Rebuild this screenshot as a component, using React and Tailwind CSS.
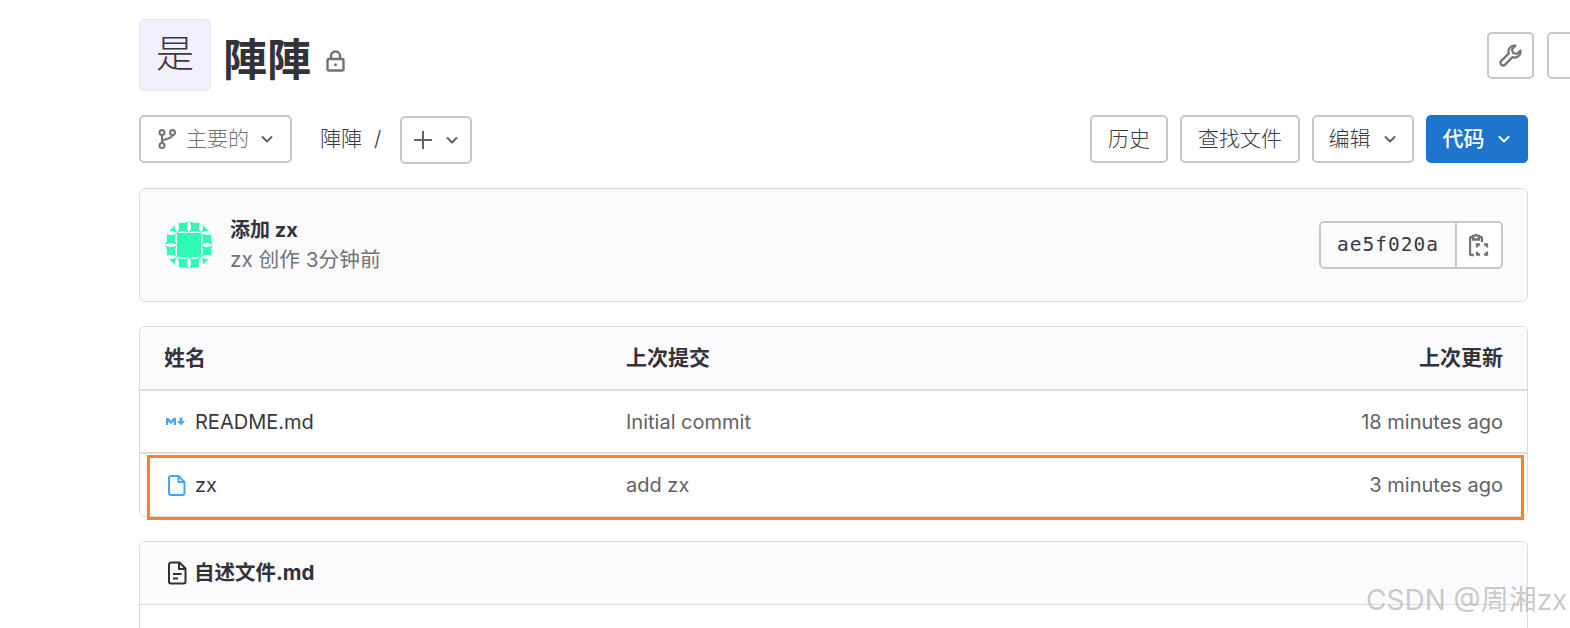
import React from "react";

const CJK = "font-['Inter','Noto_Sans_CJK_SC',sans-serif]";

function Chevron({ className = "" }) {
  return (
    <svg width="16" height="16" viewBox="0 0 16 16" fill="none" stroke="currentColor" strokeWidth="2" strokeLinecap="round" strokeLinejoin="round" className={className}>
      <path d="M3.5 6l4.5 4.5L12.5 6" />
    </svg>
  );
}

function Lock() {
  return (
    <svg width="19" height="22" viewBox="0 0 19 22" fill="none" stroke="#737278" strokeWidth="2.4">
      <rect x="1.500" y="9" width="16" height="11.500" rx="1.500" />
      <path d="M5 9V6a4.500 4.500 0 0 1 9 0v3" />
      <circle cx="9.500" cy="14.700" r="1.500" fill="#737278" stroke="none" />
    </svg>
  );
}

function Branch() {
  return (
    <svg width="20" height="22" viewBox="0 0 20 22" fill="none" stroke="#737278" strokeWidth="2">
      <circle cx="5" cy="4.500" r="2.500" />
      <circle cx="5" cy="17.500" r="2.500" />
      <circle cx="15.500" cy="4.500" r="2.500" />
      <path d="M5 7v8M5 14c0-3.500 10.500-2.500 10.500-7" />
    </svg>
  );
}

function Wrench() {
  return (
    <svg width="24" height="24" viewBox="0 0 24 24" fill="none" stroke="#737278" strokeWidth="2.200" strokeLinejoin="round">
      <path d="M15.500 2.500a6 6 0 0 0-5.700 7.900L2.300 17.900a2.600 2.600 0 0 0 3.700 3.700l7.500-7.500A6 6 0 0 0 21.500 7.500l-4 3.500-3.500-1-1-3.500 3.500-4z" />
    </svg>
  );
}

function Clipboard() {
  return (
    <svg width="20" height="26" viewBox="0 0 20 26" fill="none" stroke="#737278" strokeWidth="2.300">
      <path d="M4 5H2.500A1.500 1.500 0 0 0 1 6.500v15A1.500 1.500 0 0 0 2.500 23H5" />
      <path d="M10 5h1.500A1.500 1.500 0 0 1 13 6.500V10" />
      <path d="M4 3.800h1.500a1.700 1.700 0 0 1 3 0H10V7.500H4z" />
      <path d="M8 15.500v-3h3M15 12.500h3v3M18 19.500v3h-3M11 22.500H8v-3" />
    </svg>
  );
}

function Markdown() {
  return (
    <svg width="20" height="9" viewBox="0 0 20 9" fill="#42a5f5">
      <path d="M0 8V1h2.500l2.500 2.800L7.500 1H10v7H7.800V4.300L5 7 2.200 4.300V8z" />
      <path d="M13.700 0.500h2.600v3.500H19l-4 4.500-4-4.500h2.700z" />
    </svg>
  );
}

function FileBlue() {
  return (
    <svg width="18" height="21" viewBox="0 0 18 21" fill="none" stroke="#42a5f5" strokeWidth="2" strokeLinejoin="round">
      <path d="M3 1h7.500L16.500 7v11a2 2 0 0 1-2 2H3a2 2 0 0 1-2-2V3a2 2 0 0 1 2-2z" />
      <path d="M10.500 1v6h6" />
    </svg>
  );
}

function FileDark() {
  return (
    <svg width="19" height="24" viewBox="0 0 19 24" fill="none" stroke="#303030" strokeWidth="2" strokeLinejoin="round">
      <path d="M3 1.500h8.500L17.500 7.500v13a2 2 0 0 1-2 2H3a2 2 0 0 1-2-2v-17a2 2 0 0 1 2-2z" />
      <path d="M11 1.500v6.500h6.500M5 13h8.500M5 17.500h5" />
    </svg>
  );
}

function Identicon() {
  const c = "#2ffab6";
  const cells = [];
  const star = (x, y) => (
    <path
      key={`${x}-${y}`}
      transform={`translate(${x} ${y})`}
      d="M0 0Q6 4 12 0Q8 6 12 12Q6 8 0 12Q4 6 0 0z"
      fill={c}
    />
  );
  for (let i = 0; i < 4; i++) {
    cells.push(star(i * 12, 0));
    cells.push(star(i * 12, 36));
    if (i > 0 && i < 3) {
      cells.push(star(0, i * 12));
      cells.push(star(36, i * 12));
    }
  }
  return (
    <svg width="48" height="48" viewBox="0 0 48 48" className="shrink-0">
      <clipPath id="av"><circle cx="24" cy="24" r="24" /></clipPath>
      <g clipPath="url(#av)">
        <rect width="48" height="48" fill="#fff" />
        {cells}
        <rect x="12" y="12" width="24" height="24" fill={c} />
      </g>
    </svg>
  );
}

function Btn({ children, className = "" }) {
  return (
    <div className={`flex items-center justify-center rounded-[5px] border-2 border-[#c8c8cc] bg-white text-[21px] text-[#3a383f] ${className}`}>
      {children}
    </div>
  );
}

function Row({ icon, name, msg, time, heightClass, last }) {
  return (
    <div className={`flex items-center text-[20px] text-[#626168] ${heightClass} ${last ? "" : "border-b-2 border-[#dcdcde]"}`}>
      <div className="flex w-[486px] items-center pl-[26px]">
        <span className="flex w-[29px] justify-start">{icon}</span>
        <span className="text-[#3a383f]">{name}</span>
      </div>
      <div className="flex-1">{msg}</div>
      <div className="pr-[24px]">{time}</div>
    </div>
  );
}

export default function App() {
  return (
    <div className={`relative h-[628px] w-[1570px] overflow-hidden bg-white pl-[139px] pr-[42px] pt-[19px] ${CJK}`}>
      <div className="flex h-[72px] items-center">
        <div className="flex h-[72px] w-[72px] items-center justify-center rounded-[6px] border border-[#e6e2f5] bg-[#f3f0fd] pb-[4px] text-[38px] font-light text-[#3a383f]">是</div>
        <h1 className="ml-[12px] mt-[9px] text-[44px] font-bold leading-none text-[#333238]">陣陣</h1>
        <span className="ml-[15px] mt-[12px]"><Lock /></span>
        <div className="ml-auto mr-[-66px] flex gap-[13px]">
          <Btn className="h-[47px] w-[47px]"><Wrench /></Btn>
          <Btn className="h-[47px] w-[47px]" />
        </div>
      </div>

      <div className="mt-[24px] flex h-[48px] items-center text-[#3a383f]">
        <Btn className="h-[48px] w-[153px] gap-[9px] pl-[1px] text-[#737278]">
          <Branch />
          <span className="font-light text-[#737278]">主要的</span>
          <Chevron className="ml-[1px] text-[#626168]" />
        </Btn>
        <span className="ml-[28px] text-[21px] font-light">陣陣</span>
        <span className="ml-[12px] text-[21px] font-light">/</span>
        <Btn className="ml-[19px] mt-[2px] h-[48px] w-[72px] gap-[11px]">
          <svg width="20" height="20" viewBox="0 0 20 20" stroke="#626168" strokeWidth="2"><path d="M10 1v18M1 10h18" /></svg>
          <Chevron className="text-[#626168]" />
        </Btn>
        <div className="ml-auto flex gap-[12px]">
          <Btn className="h-[48px] w-[78px] font-light">历史</Btn>
          <Btn className="h-[48px] w-[120px] font-light">查找文件</Btn>
          <Btn className="h-[48px] w-[102px] gap-[11px] font-light">编辑<Chevron className="text-[#626168]" /></Btn>
          <div className="flex h-[48px] w-[102px] items-center justify-center gap-[11px] rounded-[5px] bg-[#1f75cb] text-[21px] font-medium text-white">代码<Chevron /></div>
        </div>
      </div>

      <div className="mt-[25px] flex h-[114px] items-center rounded-[6px] border border-[#dcdcde] bg-[#fbfafd] pl-[25px] pr-[24px]">
        <Identicon />
        <div className="ml-[17px] flex flex-col gap-[2px]">
          <div className="text-[20px] font-bold leading-[28px] text-[#333238]">添加 zx</div>
          <div className="text-[20.700px] leading-[28px] text-[#737278]">zx 创作 3分钟前</div>
        </div>
        <div className="ml-auto flex h-[48px] items-stretch rounded-[5px] border-2 border-[#c8c8cc]">
          <div className="flex w-[136px] items-center justify-center border-r-2 border-[#c8c8cc] font-['DejaVu_Sans_Mono',monospace] text-[19.500px] tracking-[1px] text-[#3a383f]">ae5f020a</div>
          <div className="flex w-[44px] items-center justify-center rounded-r-[4px] bg-white"><Clipboard /></div>
        </div>
      </div>

      <div className="mt-[24px] overflow-hidden rounded-[6px] border border-[#dcdcde]">
        <div className="flex h-[64px] items-center border-b-2 border-[#dcdcde] bg-[#fbfafd] text-[21px] font-bold text-[#333238]">
          <div className="w-[486px] pl-[24px]">姓名</div>
          <div className="flex-1">上次提交</div>
          <div className="pr-[24px]">上次更新</div>
        </div>
        <Row heightClass="h-[63px]" icon={<Markdown />} name="README.md" msg="Initial commit" time="18 minutes ago" />
        <Row heightClass="h-[62px]" icon={<span className="ml-[2px]"><FileBlue /></span>} name="zx" msg="add zx" time="3 minutes ago" last />
      </div>

      <div className="mt-[24px] h-[200px] rounded-[6px] border border-[#dcdcde]">
        <div className="flex h-[63px] items-center gap-[7px] rounded-t-[6px] border-b border-[#dcdcde] bg-[#fbfafd] pl-[28px] text-[20.500px] font-bold text-[#333238]">
          <FileDark />
          <span>自述文件.md</span>
        </div>
      </div>

      <div className="pointer-events-none absolute left-[147px] top-[455px] h-[65px] w-[1377px] border-[3px] border-[#ff7f2a]" />
      <div className="pointer-events-none absolute left-[1366px] top-[581px] whitespace-nowrap text-[28px] leading-[38px] text-[#b4b4b4]/70">CSDN @周湘zx</div>
    </div>
  );
}
